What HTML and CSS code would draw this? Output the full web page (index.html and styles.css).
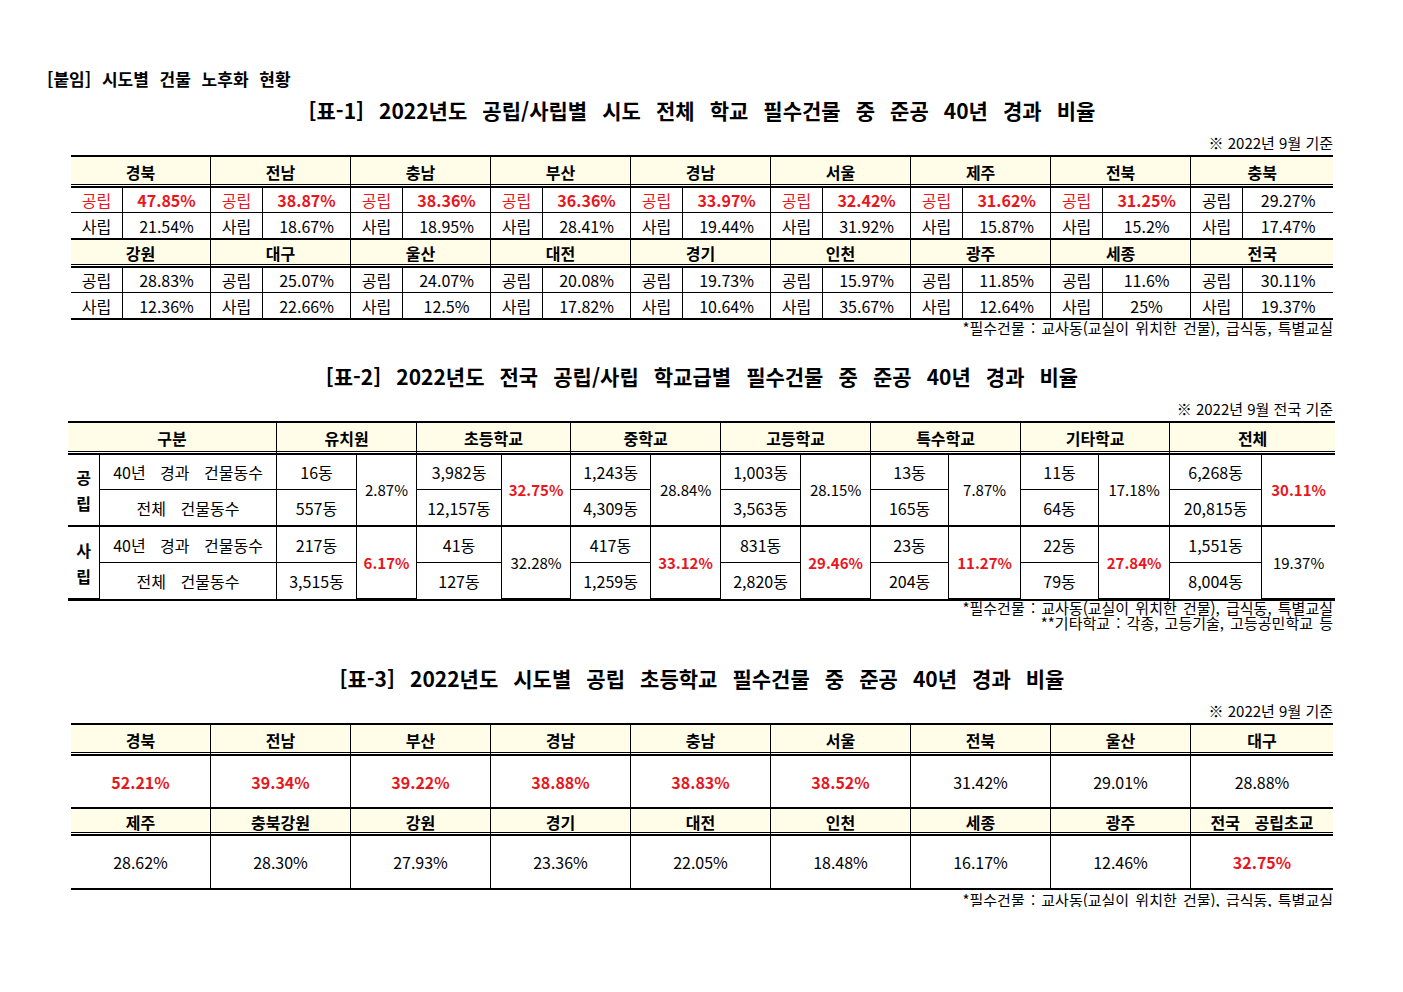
FILE: index.html
```html
<!DOCTYPE html>
<html lang="ko">
<head>
<meta charset="utf-8">
<title>시도별 건물 노후화 현황</title>
<link rel="stylesheet" href="styles.css">
</head>
<body>
<div class="page">
  <div class="doc-head">[붙임] 시도별 건물 노후화 현황</div>

  <h2 class="title t1">[표-1] 2022년도 공립/사립별 시도 전체 학교 필수건물 중 준공 40년 경과 비율</h2>
  <div class="note">※ 2022년 9월 기준</div>
  <table class="grid tb1">
    <colgroup>
      <col class="cl"><col class="cv"><col class="cl"><col class="cv"><col class="cl"><col class="cv">
      <col class="cl"><col class="cv"><col class="cl"><col class="cv"><col class="cl"><col class="cv">
      <col class="cl"><col class="cv"><col class="cl"><col class="cv"><col class="cl"><col class="cv2">
    </colgroup>
    <tr class="hd h30">
      <td colspan="2">경북</td><td colspan="2">전남</td><td colspan="2">충남</td><td colspan="2">부산</td><td colspan="2">경남</td><td colspan="2">서울</td><td colspan="2">제주</td><td colspan="2">전북</td><td colspan="2" class="e">충북</td>
    </tr>
    <tr class="thin h25">
      <td class="red">공립</td><td class="red b">47.85%</td>
      <td class="red">공립</td><td class="red b">38.87%</td>
      <td class="red">공립</td><td class="red b">38.36%</td>
      <td class="red">공립</td><td class="red b">36.36%</td>
      <td class="red">공립</td><td class="red b">33.97%</td>
      <td class="red">공립</td><td class="red b">32.42%</td>
      <td class="red">공립</td><td class="red b">31.62%</td>
      <td class="red">공립</td><td class="red b">31.25%</td>
      <td>공립</td><td class="e">29.27%</td>
    </tr>
    <tr class="thick h27">
      <td>사립</td><td>21.54%</td>
      <td>사립</td><td>18.67%</td>
      <td>사립</td><td>18.95%</td>
      <td>사립</td><td>28.41%</td>
      <td>사립</td><td>19.44%</td>
      <td>사립</td><td>31.92%</td>
      <td>사립</td><td>15.87%</td>
      <td>사립</td><td>15.2%</td>
      <td>사립</td><td class="e">17.47%</td>
    </tr>
    <tr class="hd h28">
      <td colspan="2">강원</td><td colspan="2">대구</td><td colspan="2">울산</td><td colspan="2">대전</td><td colspan="2">경기</td><td colspan="2">인천</td><td colspan="2">광주</td><td colspan="2">세종</td><td colspan="2" class="e">전국</td>
    </tr>
    <tr class="thin h25">
      <td>공립</td><td>28.83%</td>
      <td>공립</td><td>25.07%</td>
      <td>공립</td><td>24.07%</td>
      <td>공립</td><td>20.08%</td>
      <td>공립</td><td>19.73%</td>
      <td>공립</td><td>15.97%</td>
      <td>공립</td><td>11.85%</td>
      <td>공립</td><td>11.6%</td>
      <td>공립</td><td class="e">30.11%</td>
    </tr>
    <tr class="h25">
      <td>사립</td><td>12.36%</td>
      <td>사립</td><td>22.66%</td>
      <td>사립</td><td>12.5%</td>
      <td>사립</td><td>17.82%</td>
      <td>사립</td><td>10.64%</td>
      <td>사립</td><td>35.67%</td>
      <td>사립</td><td>12.64%</td>
      <td>사립</td><td>25%</td>
      <td>사립</td><td class="e">19.37%</td>
    </tr>
  </table>
  <div class="foot">*필수건물 : 교사동(교실이 위치한 건물), 급식동, 특별교실</div>

  <h2 class="title t2">[표-2] 2022년도 전국 공립/사립 학교급별 필수건물 중 준공 40년 경과 비율</h2>
  <div class="note">※ 2022년 9월 전국 기준</div>
  <table class="grid tb2">
    <colgroup>
      <col style="width:32px"><col style="width:177px">
      <col style="width:80px"><col style="width:60px">
      <col style="width:85px"><col style="width:69px">
      <col style="width:80px"><col style="width:70px">
      <col style="width:80px"><col style="width:70px">
      <col style="width:78px"><col style="width:72px">
      <col style="width:78px"><col style="width:71px">
      <col style="width:92px"><col style="width:73px">
    </colgroup>
    <tr class="hd h31">
      <td colspan="2">구분</td><td colspan="2">유치원</td><td colspan="2">초등학교</td><td colspan="2">중학교</td><td colspan="2">고등학교</td><td colspan="2">특수학교</td><td colspan="2">기타학교</td><td colspan="2" class="e">전체</td>
    </tr>
    <tr class="thin h35">
      <td rowspan="2" class="side thick">공<br>립</td>
      <td>40년 경과 건물동수</td>
      <td>16동</td><td rowspan="2" class="pct thick">2.87%</td>
      <td>3,982동</td><td rowspan="2" class="pct thick red b">32.75%</td>
      <td>1,243동</td><td rowspan="2" class="pct thick">28.84%</td>
      <td>1,003동</td><td rowspan="2" class="pct thick">28.15%</td>
      <td>13동</td><td rowspan="2" class="pct thick">7.87%</td>
      <td>11동</td><td rowspan="2" class="pct thick">17.18%</td>
      <td>6,268동</td><td rowspan="2" class="pct thick red b e">30.11%</td>
    </tr>
    <tr class="thick h37">
      <td>전체 건물동수</td>
      <td>557동</td><td>12,157동</td><td>4,309동</td><td>3,563동</td><td>165동</td><td>64동</td><td>20,815동</td>
    </tr>
    <tr class="thin h36">
      <td rowspan="2" class="side">사<br>립</td>
      <td>40년 경과 건물동수</td>
      <td>217동</td><td rowspan="2" class="pct red b">6.17%</td>
      <td>41동</td><td rowspan="2" class="pct">32.28%</td>
      <td>417동</td><td rowspan="2" class="pct red b">33.12%</td>
      <td>831동</td><td rowspan="2" class="pct red b">29.46%</td>
      <td>23동</td><td rowspan="2" class="pct red b">11.27%</td>
      <td>22동</td><td rowspan="2" class="pct red b">27.84%</td>
      <td>1,551동</td><td rowspan="2" class="pct e">19.37%</td>
    </tr>
    <tr class="h36">
      <td>전체 건물동수</td>
      <td>3,515동</td><td>127동</td><td>1,259동</td><td>2,820동</td><td>204동</td><td>79동</td><td>8,004동</td>
    </tr>
  </table>
  <div class="foot foot2">*필수건물 : 교사동(교실이 위치한 건물), 급식동, 특별교실<br>**기타학교 : 각종, 고등기술, 고등공민학교 등</div>

  <h2 class="title t3">[표-3] 2022년도 시도별 공립 초등학교 필수건물 중 준공 40년 경과 비율</h2>
  <div class="note">※ 2022년 9월 기준</div>
  <table class="grid tb3">
    <colgroup>
      <col class="c3"><col class="c3"><col class="c3"><col class="c3"><col class="c3"><col class="c3"><col class="c3"><col class="c3"><col class="c3l">
    </colgroup>
    <tr class="hd h30">
      <td>경북</td><td>전남</td><td>부산</td><td>경남</td><td>충남</td><td>서울</td><td>전북</td><td>울산</td><td class="e">대구</td>
    </tr>
    <tr class="thick h53">
      <td class="red b">52.21%</td><td class="red b">39.34%</td><td class="red b">39.22%</td><td class="red b">38.88%</td><td class="red b">38.83%</td><td class="red b">38.52%</td><td>31.42%</td><td>29.01%</td><td class="e">28.88%</td>
    </tr>
    <tr class="hd h27">
      <td>제주</td><td>충북강원</td><td>강원</td><td>경기</td><td>대전</td><td>인천</td><td>세종</td><td>광주</td><td class="e">전국 공립초교</td>
    </tr>
    <tr class="h50">
      <td>28.62%</td><td>28.30%</td><td>27.93%</td><td>23.36%</td><td>22.05%</td><td>18.48%</td><td>16.17%</td><td>12.46%</td><td class="e red b">32.75%</td>
    </tr>
  </table>
  <div class="foot foot3">*필수건물 : 교사동(교실이 위치한 건물), 급식동, 특별교실</div>
</div>
</body>
</html>
```

FILE: styles.css
```css
html, body {
  margin: 0;
  padding: 0;
  background: #fff;
}
body {
  font-family: "Noto Sans CJK KR", "Noto Sans", sans-serif;
  color: #000;
  width: 1403px;
}
.page {
  margin-left: 71px;
  width: 1262px;
  padding-top: 69px;
}
.doc-head {
  margin-left: -24px;
  font-size: 17px;
  line-height: 20px;
  font-weight: bold;
  word-spacing: 6px;
}
.title {
  margin: 0;
  font-size: 21px;
  line-height: 28px;
  font-weight: bold;
  text-align: center;
  word-spacing: 9.2px;
}
.t1 { margin-top: 7px; }
.t2 { margin-top: 27px; }
.t3 { margin-top: 34px; }
.note {
  margin-top: 11px;
  font-size: 15px;
  line-height: 16px;
  text-align: right;
}
.foot {
  font-size: 15px;
  line-height: 15px;
  text-align: right;
  word-spacing: 2px;
}
.foot2 {
  line-height: 15px;
  margin-top: -1px;
}
.foot3 { margin-top: 2px; }

.grid {
  margin-top: 4px;
  border-collapse: separate;
  border-spacing: 0;
  table-layout: fixed;
  border-top: 2px solid #000;
  border-bottom: 2px solid #000;
}
.tb1, .tb3 { width: 1262px; }
.tb2 { width: 1267px; margin-left: -3px; }
.cl { width: 52px; }
.cv { width: 88px; }
.cv2 { width: 90px; }
.c3 { width: 140px; }
.c3l { width: 142px; }

.grid td {
  box-sizing: border-box;
  padding: 0;
  text-align: center;
  vertical-align: middle;
  font-size: 16px;
  line-height: 20px;
  border-right: 1px solid #000;
  white-space: nowrap;
  word-spacing: 10px;
}
.grid td.e { border-right: none; }

.hd td {
  background: #fffde7;
  font-weight: bold;
  border-bottom: 2px solid #000;
  box-shadow: inset 0 -1px 0 #fff, inset 0 -2px 0 #000;
}
.thin td, td.thin { border-bottom: 1px solid #000; }
.thick td, td.thick { border-bottom: 2px solid #000; }

.h25 td { height: 25px; }
.h27 td { height: 27px; }
.h28 td { height: 28px; }
.h30 td { height: 31px; }
.h31 td { height: 32px; }
.h35 td { height: 35px; }
.h36 td { height: 36px; }
.h37 td { height: 37px; }
.h50 td { height: 52px; }
.h53 td { height: 53px; }

.red { color: #e8161d; }
.b { font-weight: bold; }
.side {
  font-weight: bold;
  line-height: 26px !important;
}
.pct { font-size: 15px !important; }
```
